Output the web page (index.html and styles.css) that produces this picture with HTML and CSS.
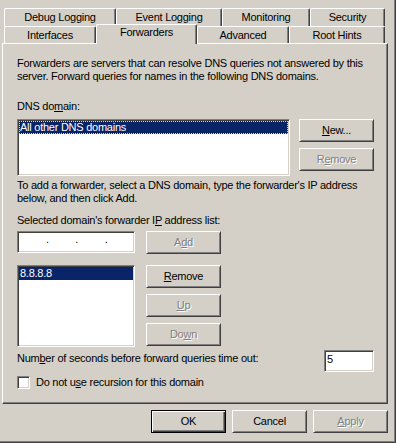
FILE: index.html
```html
<!DOCTYPE html>
<html lang="en">
<head>
  <meta charset="UTF-8" />
  <meta name="viewport" content="width=device-width, initial-scale=1.0"/>
  <title>DNS Server Properties</title>
  <link rel="stylesheet" href="styles.css">
</head>
<body>
  <div class="dialog">

    <div class="tabs">
      <div class="tab-row back">
        <div class="tab tab-debug">Debug Logging</div>
        <div class="tab tab-event">Event Logging</div>
        <div class="tab tab-monitor">Monitoring</div>
        <div class="tab tab-security">Security</div>
      </div>
      <div class="tab-row front">
        <div class="tab tab-interfaces">Interfaces</div>
        <div class="tab tab-forwarders selected">Forwarders</div>
        <div class="tab tab-advanced">Advanced</div>
        <div class="tab tab-roothints">Root Hints</div>
      </div>
    </div>

    <div class="page">
      <p class="intro">Forwarders are servers that can resolve DNS queries not answered by this<br>server. Forward queries for names in the following DNS domains.</p>

      <div class="label label-domain">DNS do<u>m</u>ain:</div>
      <div class="domain-row">
        <div class="field listbox domains">
          <div class="item selected focused">All other DNS domains</div>
        </div>
        <div class="btn-col">
          <button class="btn"><u>N</u>ew...</button>
          <button class="btn" disabled>R<u>e</u>move</button>
        </div>
      </div>

      <p class="help">To add a forwarder, select a DNS domain, type the forwarder's IP address<br>below, and then click Add.</p>
      <div class="label label-ip">Selected domain's forwarder I<u>P</u> address list:</div>

      <div class="ip-row">
        <div class="field ip"><span>.</span><span>.</span><span>.</span></div>
        <button class="btn" disabled>A<u>d</u>d</button>
      </div>

      <div class="fwd-row">
        <div class="field listbox forwarders">
          <div class="item selected">8.8.8.8</div>
        </div>
        <div class="btn-col">
          <button class="btn"><u>R</u>emove</button>
          <button class="btn" disabled><u>U</u>p</button>
          <button class="btn" disabled>Do<u>w</u>n</button>
        </div>
      </div>

      <div class="timeout-row">
        <span class="timeout-label">Num<u>b</u>er of seconds before forward queries time out:</span>
        <div class="field timeout">5</div>
      </div>

      <label class="check-row">
        <span class="checkbox"></span>
        <span>Do not u<u>s</u>e recursion for this domain</span>
      </label>
    </div>

    <div class="actions">
      <button class="btn default">OK</button>
      <button class="btn">Cancel</button>
      <button class="btn" disabled><u>A</u>pply</button>
    </div>

  </div>
</body>
</html>
```

FILE: styles.css
```css
* {
  box-sizing: border-box;
}

html, body {
  margin: 0;
}

body {
  width: 396px;
  height: 443px;
  overflow: hidden;
  background-color: #d4d0c8;
  font-family: "Liberation Sans", Arial, sans-serif;
  font-size: 11px;
  line-height: 13px;
  letter-spacing: -0.25px;
  white-space: nowrap;
  color: #000;
  box-shadow: inset -1px -1px #404040, inset -2px -2px #808080;
}

.dialog {
  padding: 8px 0 0 2px;
}

/* tabs */

.tabs {
  padding-left: 2px;
}

.tab-row {
  display: flex;
  align-items: flex-start;
}

.tab-row.back { height: 18px; }
.tab-row.front { height: 17px; }

.tab {
  height: 100%;
  padding-top: 2px;
  text-align: center;
  background-color: #d4d0c8;
  border-left: 1px solid #fff;
  border-top: 1px solid #fff;
  border-right: 1px solid #404040;
  border-radius: 2px 2px 0 0;
  box-shadow: inset -1px 0 #808080;
}

.tab.selected {
  position: relative;
  z-index: 1;
  height: 20px;
  margin-top: -2px;
  padding-top: 1px;
}

.tab-debug { width: 112px; }
.tab-event { width: 106px; }
.tab-monitor { width: 88px; }
.tab-security { width: 75px; }
.tab-interfaces { width: 92px; }
.tab-forwarders { width: 101px; }
.tab-advanced { width: 92px; }
.tab-roothints { width: 96px; }

/* tab page */

.page {
  width: 386px;
  height: 361px;
  padding: 0 13px 0 14px;
  border: 1px solid;
  border-color: #fff #404040 #404040 #fff;
  box-shadow: inset -1px -1px #808080;
}

.intro,
.help {
  margin: 0;
}

.intro { margin-top: 13px; }
.label-domain { margin-top: 17px; }
.help { margin-top: 3px; }
.label-ip { margin-top: 9px; }

.domain-row {
  margin-top: 6px;
  display: flex;
  justify-content: space-between;
}

.ip-row {
  margin-top: 4px;
  display: flex;
  align-items: flex-start;
  gap: 11px;
}

.fwd-row {
  margin-top: 11px;
  display: flex;
  align-items: flex-start;
  gap: 11px;
}

.timeout-row {
  margin-top: 3px;
  display: flex;
  align-items: flex-start;
  justify-content: space-between;
}

.timeout-label {
  margin-top: 2px;
}

.check-row {
  margin-top: 4px;
  display: flex;
  align-items: center;
  gap: 6px;
}

/* sunken fields */

.field {
  background-color: #fff;
  padding: 1px;
  border: 1px solid;
  border-color: #808080 #fff #fff #808080;
  box-shadow: inset 1px 1px #404040, inset -1px -1px #d4d0c8;
}

.domains {
  width: 273px;
  height: 57px;
}

.forwarders {
  width: 118px;
  height: 82px;
}

.item {
  height: 13px;
  padding-left: 1px;
}

.item.selected {
  background-color: #0a246a;
  color: #fff;
}

.item.focused {
  outline: 1px dotted #e8d890;
  outline-offset: -1px;
}

.ip {
  width: 118px;
  height: 22px;
  display: flex;
  padding: 1px 0 0 28px;
}

.ip span {
  width: 30px;
}

.timeout {
  width: 50px;
  height: 22px;
  padding: 2px 0 0 2px;
}

.checkbox {
  width: 13px;
  height: 13px;
  background-color: #fff;
  border: 1px solid;
  border-color: #808080 #fff #fff #808080;
  box-shadow: inset 1px 1px #404040, inset -1px -1px #d4d0c8;
}

/* buttons */

.btn-col {
  width: 75px;
  display: flex;
  flex-direction: column;
  gap: 6px;
}

.btn {
  width: 75px;
  height: 23px;
  margin: 0;
  padding: 0;
  font: inherit;
  letter-spacing: inherit;
  color: #000;
  background-color: #d4d0c8;
  border: 1px solid;
  border-color: #fff #404040 #404040 #fff;
  border-radius: 0;
  box-shadow: inset 1px 1px #d4d0c8, inset -1px -1px #808080;
  display: flex;
  align-items: center;
  justify-content: center;
}

.btn:disabled {
  color: #808080;
  text-shadow: 1px 1px 0 #fff;
}

.btn.default {
  border-color: #000;
  box-shadow: inset 1px 1px #fff, inset -1px -1px #404040, inset -2px -2px #808080;
}

.actions {
  margin-top: 6px;
  padding-right: 8px;
  display: flex;
  justify-content: flex-end;
  gap: 6px;
}
```
